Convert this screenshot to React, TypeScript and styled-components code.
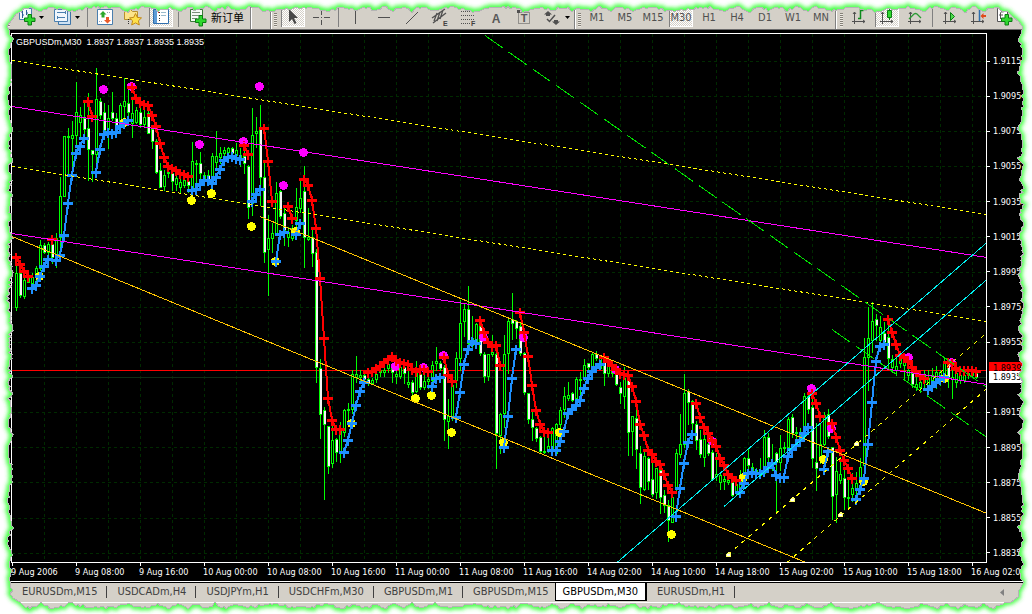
import React from "react";
import styled, { createGlobalStyle, css } from "styled-components";

const face = "#d4d0c8";
const uiFont = `"DejaVu Sans Condensed", "Liberation Sans", "Noto Sans CJK SC", sans-serif`;

const GlobalStyle = createGlobalStyle`
  *, *::before, *::after { box-sizing: border-box; }
  body { margin: 0; background: #fff; font-family: ${uiFont}; }
  button { font: inherit; margin: 0; padding: 0; border: 0; background: none; color: inherit; }
`;

const Terminal = styled.div`
  position: relative;
  padding-bottom: 7px;
  overflow: hidden;
`;

/* ---------- toolbar ---------- */

const Toolbar = styled.header`
  display: flex;
  height: 30px;
  padding-left: 4px;
  background: ${face};
  border-bottom: 1px solid #6c6c6c;
  overflow: hidden;
`;

const ToolGroup = styled.div<{ $min?: number; $last?: boolean }>`
  display: flex;
  flex: none;
  align-items: flex-end;
  gap: 4px;
  padding: 0 2px 2px ${(p) => (p.$last ? 4 : 3)}px;
  min-width: ${(p) => p.$min ?? 0}px;
  border-right: ${(p) => (p.$last ? "0" : "1px solid #808080")};
  box-shadow: ${(p) => (p.$last ? "none" : "1px 0 0 #fff")};
`;

const Grip = styled.span`
  width: 3px;
  height: 14px;
  background: repeating-linear-gradient(#848078 0 1px, #ece9e2 1px 2px);
`;

const Separator = styled.span`
  width: 1px;
  height: 20px;
  margin: 0 1px;
  background: #808080;
`;

const ToolButton = styled.button<{ $width?: number; $pressed?: boolean }>`
  display: flex;
  flex: none;
  align-items: center;
  justify-content: center;
  gap: 3px;
  width: ${(p) => p.$width ?? 24}px;
  height: 20px;
  color: #505050;
  font-size: 11px;
  line-height: 20px;
  white-space: nowrap;
  svg { display: block; flex: none; }
  ${(p) =>
    p.$pressed &&
    css`
      background: repeating-conic-gradient(#fff 0 25%, ${face} 0 50%) 0 0 / 2px 2px;
      box-shadow: inset 1px 0 0 #808080, inset -1px -1px 0 #fff;
    `}
`;

const FrameButton = styled(ToolButton)`
  padding-top: 2px;
`;

const OrderLabel = styled.span`
  color: #000;
  font-family: "Noto Sans CJK SC", sans-serif;
  font-size: 11px;
`;

const Icon = ({ children }: { children: React.ReactNode }) => (
  <svg width="20" height="20" viewBox="0 0 20 20" fill="none" aria-hidden="true">
    {children}
  </svg>
);

const Caret = () => (
  <svg width="5" height="3" viewBox="0 0 5 3" aria-hidden="true">
    <path d="M0 0h5L2.500 3z" fill="#000" />
  </svg>
);

const Plus = ({ x, y }: { x: number; y: number }) => (
  <path
    transform={`translate(${x} ${y})`}
    d="M4 .5h3.500v3.500H11v3.500H7.500V11H4V7.500H.5V4H4z"
    fill="#2fd82f"
    stroke="#0a7d12"
  />
);

const ChartAxes = () => (
  <path d="M5.500 5v12M3 14.500h13M4 7l1.500-2L7 7M14 13l2 1.500-2 1.500" stroke="#505050" />
);

const NewChartIcon = () => (
  <Icon>
    <path d="M3.500 1.500h12v11h-12z" fill="#f4f9fd" stroke="#4a7fae" />
    <path d="M6.500 3v8M5 5h1M7 8h1M10.500 3v5M11 6h1" stroke="#2b5f94" />
    <Plus x={8} y={7} />
  </Icon>
);

const ProfilesIcon = () => (
  <Icon>
    <path d="M6.500 4.500h12v13h-12z" fill="#cfe2f3" stroke="#3d75a8" />
    <path d="M2.500 2.500h13v12h-13z" fill="#f0f6fc" stroke="#4a7fae" />
    <path d="M5 5.500h8M5 10.500h8M5.500 9v3M13.500 4v3" stroke="#4a7fae" />
  </Icon>
);

const MarketWatchIcon = () => (
  <Icon>
    <path d="M2.500 2.500h15v15h-15z" fill="#fff" stroke="#4a7fae" />
    <path d="M8 4l3.500 3.500H9.500v3h-3v-3h-2z" fill="#2aa82a" />
    <path d="M12.500 16.500L9 13h2v-3h3v3h2z" fill="#ea5a2a" />
    <path d="M12 5.500h4M4 14.500h3" stroke="#99aabb" strokeDasharray="1 1" />
  </Icon>
);

const FavoritesIcon = () => (
  <Icon>
    <path d="M1.500 4.500l2-2h4l2 2h5v8h-13z" fill="#fbe48a" stroke="#b8902c" />
    <path d="M5.500 12v6" stroke="#333" strokeDasharray="1 1" />
    <path
      d="M12.500 6.500l1.800 3.900 4.200.5-3.100 2.900.9 4.200-3.800-2.100L8.700 18l.9-4.200-3.100-2.900 4.200-.5z"
      fill="#ffe14a"
      stroke="#c28a18"
    />
  </Icon>
);

const NavigatorIcon = () => (
  <Icon>
    <path d="M2.500 2.500h15v14h-15z" fill="#fff" stroke="#2f6fae" />
    <path d="M3 3h3v13H3z" fill="#5d9bd6" />
    <path d="M8 5.500h1M8 8.500h1M8 11.500h1M8 13.500h1" stroke="#333" />
    <path d="M7 5.500h1" stroke="#e33" />
    <path d="M10 5.500h5M10 8.500h5" stroke="#9bc" />
  </Icon>
);

const NewOrderIcon = () => (
  <Icon>
    <path d="M2.500 2.500h12v12h-12z" fill="#f4faf4" stroke="#3b7a3b" />
    <path d="M4 5.500h8M4 8.500h8M4 11.500h5" stroke="#7a8f7a" />
    <Plus x={7} y={8} />
  </Icon>
);

const CursorIcon = () => (
  <Icon>
    <path d="M6 2v13l3-3 2.500 5 2-1-2.500-5h4z" fill="#484848" />
  </Icon>
);

const CrosshairIcon = () => (
  <Icon>
    <path d="M2 10.500h6M13 10.500h6M10.500 3v5M10.500 13v5" stroke="#505050" />
    <path d="M10 10.500h1" stroke="#505050" />
  </Icon>
);

const VerticalLineIcon = () => (
  <Icon>
    <path d="M9.500 4v13" stroke="#505050" />
  </Icon>
);

const HorizontalLineIcon = () => (
  <Icon>
    <path d="M4 10.500h12" stroke="#505050" />
  </Icon>
);

const TrendLineIcon = () => (
  <Icon>
    <path d="M4 17L16 5" stroke="#505050" />
  </Icon>
);

const SmallMark = styled.text`
  font: bold 7px "Liberation Sans", sans-serif;
`;

const ChannelIcon = () => (
  <Icon>
    <path d="M2 11L15 2M3 16L16 6M4 14l3-8M7 14l3-9M10 12l3-9" stroke="#505050" strokeWidth="1.300" />
    <SmallMark x="13" y="19" fill="#404040">E</SmallMark>
  </Icon>
);

const FibonacciIcon = () => (
  <Icon>
    <path d="M3 4.500h14M3 8.500h14M3 12.500h14M3 16.500h9" stroke="#505050" strokeDasharray="1 1" />
    <SmallMark x="13" y="19" fill="#404040">F</SmallMark>
  </Icon>
);

const TextIcon = () => (
  <Icon>
    <text x="10" y="16" textAnchor="middle" fontFamily="Liberation Sans" fontWeight="bold" fontSize="12" fill="#585858">
      A
    </text>
  </Icon>
);

const TextLabelIcon = () => (
  <Icon>
    <path d="M4.500 5.500h11v11h-11z" stroke="#505050" strokeDasharray="1 1" />
    <path d="M3 3h3v3H3z" fill="#505050" />
    <text x="10" y="15" textAnchor="middle" fontFamily="Liberation Sans" fontWeight="bold" fontSize="11" fill="#585858">
      T
    </text>
  </Icon>
);

const ArrowsIcon = () => (
  <Icon>
    <path d="M6 4l4 3.500H8V9H4V7.500H2zM14 18l-4-3.500h2V13h4v1.500h2z" fill="#505050" />
    <path d="M5 12l2.500 2.500L13 8" stroke="#505050" strokeWidth="1.500" />
  </Icon>
);

const BarsIcon = () => (
  <Icon>
    <ChartAxes />
    <path d="M11.500 2v10M11.500 3.500h3M9 11.500h3" stroke="#0c8a1c" strokeWidth="1.500" />
  </Icon>
);

const CandlesIcon = () => (
  <Icon>
    <ChartAxes />
    <path d="M12.500 1v12" stroke="#0a7d12" />
    <path d="M10.500 3.500h4v7h-4z" fill="#2fd82f" stroke="#0a7d12" />
  </Icon>
);

const LineIcon = () => (
  <Icon>
    <ChartAxes />
    <path d="M4 12l5-5q1.500-1 3 0l4 4" stroke="#2a9a32" strokeWidth="1.300" />
  </Icon>
);

const AutoScrollIcon = () => (
  <Icon>
    <ChartAxes />
    <path d="M10.500 5.500l4 4-4 4z" fill="#4fdc4f" stroke="#0a7d12" />
  </Icon>
);

const ShiftIcon = () => (
  <Icon>
    <ChartAxes />
    <path d="M11.500 3v11" stroke="#2f6fae" strokeWidth="1.500" />
    <path d="M12.500 9l3-3v2h2.500v2h-2.500v2z" fill="#e04a1a" />
  </Icon>
);

const IndicatorsIcon = () => (
  <Icon>
    <path d="M1.500 1.500h7l3 3v10h-10z" fill="#fff" stroke="#555" />
    <path d="M4.500 12V6q0-2 3-1M3 8h4" stroke="#555" />
    <Plus x={5} y={7} />
  </Icon>
);

/* ---------- chart ---------- */

const ChartArea = styled.main`
  display: grid;
  grid-template-columns: minmax(0, 1fr) 45px;
  padding: 3px 0 0 11px;
  background: #000;
  color: #fff;
  font-size: 9px;
  line-height: 12px;
`;

const Plot = styled.section`
  position: relative;
  border: 1px solid #fff;
  svg { display: block; width: 100%; height: auto; }
`;

const Quote = styled.div`
  position: absolute;
  top: 2px;
  left: 4px;
  font-family: "Liberation Sans", sans-serif;
  white-space: pre;
`;

const PriceAxis = styled.div`
  position: relative;
  display: flex;
  flex-direction: column;
  justify-content: space-between;
  padding: 22px 0 4px;
`;

const Price = styled.div<{ $current?: boolean }>`
  position: relative;
  display: flex;
  align-items: center;
  gap: 3px;
  height: 12px;
  &::before { content: ""; width: 3px; height: 1px; background: #fff; }
  ${(p) => p.$current && css`margin-left: 2px; gap: 1px; background: #fff; color: #000;`}
`;

const AskTag = styled.div`
  position: absolute;
  top: 62%;
  left: 2px;
  right: 0;
  height: 12px;
  padding-left: 4px;
  background: #f00;
  color: #000;
`;

const TimeAxis = styled.div`
  display: grid;
  grid-template-columns: repeat(15, minmax(0, 64fr)) minmax(0, 15fr);
  height: 18px;
  padding-left: 1px;
`;

const Time = styled.div`
  position: relative;
  padding-top: 3px;
  white-space: nowrap;
  text-indent: -1px;
  &::before {
    content: "";
    position: absolute;
    top: 0;
    left: 0;
    width: 1px;
    height: 3px;
    background: #fff;
  }
`;

const prices = [
  "1.9115", "1.9095", "1.9075", "1.9055", "1.9035", "1.9015", "1.8995", "1.8975",
  "1.8955", "1.8935", "1.8915", "1.8895", "1.8875", "1.8855", "1.8835",
];

const times = [
  "9 Aug 2006", "9 Aug 08:00", "9 Aug 16:00", "10 Aug 00:00", "10 Aug 08:00", "10 Aug 16:00",
  "11 Aug 00:00", "11 Aug 08:00", "11 Aug 16:00", "14 Aug 02:00", "14 Aug 10:00", "14 Aug 18:00",
  "15 Aug 02:00", "15 Aug 10:00", "15 Aug 18:00", "16 Aug 02:00",
];

/* One candle per entry, 4 units apart: high, body top, body bottom, low; "b" marks a falling candle. */
const candles = `
263 273 307 310|267 273 295 297 b|277 280 296 298|273 277 282 282|273 277 283 283|266 268 277 283|240 245 268 270|243 245 252 253 b
242 244 252 258|240 244 257 263 b|233 238 257 267|177 196 237 257|136 136 196 196|128 136 137 174|121 135 138 173|82 112 135 145
107 115 122 138|102 118 129 137 b|93 128 149 180 b|150 150 154 181 b|68 99 154 173|98 101 115 118 b|103 112 130 132 b|105 118 129 148
92 112 118 120 b|113 118 125 127 b|103 105 123 123|78 101 106 119|88 103 112 120 b|97 113 123 137|107 110 122 123|105 112 124 127 b
108 117 124 127|107 113 133 133 b|127 129 141 148 b|139 141 172 173 b|163 170 187 187 b|170 175 186 190|170 172 173 177|172 173 181 190 b
173 178 184 190|177 182 187 192|175 180 185 187|173 181 185 192 b|142 161 187 193|160 163 164 182|152 163 173 178 b|172 175 178 183
170 175 182 185 b|153 156 183 187|131 156 162 170|147 153 157 163|147 150 153 162|147 148 152 155|147 148 153 160 b|143 150 155 158
148 155 158 166|140 156 163 173 b|165 166 207 218 b|108 135 203 215|117 131 133 147|105 128 177 205 b|163 177 252 262 b|215 238 249 295
223 233 238 252|182 193 233 234|190 191 216 218 b|208 213 230 245 b|227 232 237 246|225 228 238 240|188 207 220 227|180 198 208 212
166 191 237 267 b|208 237 239 240|227 237 253 266 b|249 252 367 382 b|359 368 414 438 b|407 410 424 499 b|426 426 466 473 b|425 440 463 467
438 439 452 461 b|422 430 452 462|409 410 432 436|403 409 410 420|370 374 409 413|356 374 377 382|370 375 377 380|373 375 379 383 b
377 379 383 385 b|378 380 383 384|373 374 379 382|368 370 372 376|367 370 372 376|363 364 368 372|363 365 372 382 b|366 374 376 383
365 367 376 378|366 367 373 383 b|367 382 384 387|380 382 392 395 b|361 370 391 392|370 374 387 389 b|373 381 387 389|375 379 381 388
361 365 380 381|347 361 363 370|361 363 368 370 b|365 367 419 440 b|399 416 421 448|383 385 418 420|352 358 380 387|300 323 358 370
303 309 321 336|286 309 343 346 b|316 338 345 347|323 324 342 344|325 326 353 355 b|352 354 376 382 b|354 354 376 380|335 352 354 356
352 354 433 468 b|413 414 435 453|335 354 413 427|318 321 353 373|293 319 323 339 b|320 321 328 338 b|322 326 353 355 b|352 353 392 394 b
393 393 419 423 b|412 419 427 440 b|427 428 438 441 b|436 437 451 453 b|435 451 452 453|437 446 451 452|427 428 450 451|423 424 453 454
407 410 424 427|387 396 409 417|382 395 398 400|392 393 400 401 b|377 379 398 400|372 379 380 400|359 365 379 380|363 363 367 372 b
353 354 368 372|351 354 358 360 b|357 358 368 368|357 360 373 385 b|358 365 373 376|360 367 373 376 b|365 372 384 385 b|382 387 393 403 b
367 378 396 408|378 379 432 455 b|416 416 431 455|410 418 449 468 b|446 453 487 503 b|452 456 489 490|457 458 481 489 b|460 479 494 496 b
468 468 492 498|467 470 497 513 b|490 495 505 512 b|500 505 520 541 b|490 497 522 522|449 453 487 490|414 444 454 457|374 393 444 447
389 391 402 424 b|400 401 423 435 b|421 424 440 449 b|430 439 454 457 b|433 439 457 466|440 444 453 455 b|450 452 479 480 b|453 474 476 480
473 475 482 489|476 479 481 489|475 480 482 484|480 482 495 496 b|483 484 493 494|470 480 487 490|457 458 473 475|448 458 465 470 b
463 467 472 474|468 470 472 475|458 470 475 477|430 437 473 475|433 437 457 465 b|444 462 467 470|452 453 462 512 b|435 448 462 470
442 447 448 452|417 419 447 450|414 417 433 437 b|427 432 433 440|428 432 435 438|393 396 432 433|388 396 409 413 b|387 407 458 467 b
423 462 468 490 b|423 444 457 463|412 415 444 445|409 414 436 438 b|447 447 496 519 b|457 471 494 522|457 474 480 483|467 478 497 509 b
477 497 498 507|473 488 494 501|472 483 490 498|458 467 477 490|338 357 465 477|307 338 357 390|302 321 340 352|314 319 325 340 b
316 327 340 347|322 333 342 345 b|325 337 358 368 b|355 359 367 372|357 366 370 375|355 359 363 367|358 362 365 378|362 370 375 380
370 373 384 387 b|372 384 387 390|378 382 387 392|370 375 382 388|370 378 388 390|368 375 380 390|366 372 380 388|370 372 378 385
357 362 373 378|360 363 377 387 b|367 377 379 398|368 373 382 387|372 375 380 383|372 375 380 382|368 373 375 378|368 372 375 377
368 373 377 378 b`
  .trim()
  .split(/[|\n]/)
  .map((entry, i) => {
    const [high, top, bottom, low, down] = entry.trim().split(" ");
    return { x: 16 + i * 4, high: +high, top: +top, bottom: +bottom, low: +low, down: down === "b" };
  });

/* Signal runs: start x, then one y for every following bar. */
const sellRuns = [
  [16, 257, 264, 271, 276], [52, 239], [88, 101, 116],
  [132, 87, 98, 102, 104, 105, 115, 126, 143, 157, 166, 168, 170, 173, 174, 176],
  [244, 145, 154], [264, 128, 161, 201], [288, 206, 218],
  [304, 179, 185, 200, 228, 278, 338, 398, 420, 429, 429],
  [368, 372, 371, 368, 366, 362, 359, 356, 360, 362, 363, 364, 369, 371, 369, 369, 371],
  [444, 357, 375, 381], [480, 320, 332, 342, 346, 345, 365],
  [520, 312, 332, 356, 385, 410, 424, 431, 432],
  [604, 357, 361, 365, 369, 373, 374, 375, 386, 401, 424, 435, 450, 454, 461, 464, 474, 485, 492],
  [696, 403, 417, 427, 433, 440, 446, 458, 465, 474, 477, 480],
  [812, 393, 403, 416], [832, 423, 437, 450, 460, 468, 478],
  [888, 319, 332, 344, 355, 357, 361, 367, 371, 375, 378],
  [948, 362, 363, 368, 370, 370, 370, 370, 371],
];

const buyRuns = [
  [32, 288, 285, 276, 266, 259],
  [56, 260, 255, 235, 203, 175, 153, 146, 138],
  [96, 172, 149, 134, 132, 133, 132, 126, 123, 120],
  [192, 190, 189, 184, 180, 180, 183, 177, 169, 160, 157, 156, 158, 159],
  [252, 201, 194, 189], [276, 261, 234, 232], [296, 234, 223],
  [344, 452, 440, 423, 405, 391, 382], [432, 386, 378, 377],
  [456, 417, 392, 364, 349, 341, 343], [504, 447, 416, 378, 349],
  [552, 450, 450, 441, 431, 413, 409, 405, 400, 388, 378, 371, 367, 364],
  [676, 516, 488, 463, 442, 434],
  [740, 492, 483, 473, 472, 473, 473, 471, 467, 463, 475, 477, 477, 456, 449, 445, 440, 433, 427],
  [824, 469, 451], [856, 499, 489, 478, 444, 402, 361, 346, 344],
  [928, 389, 386, 382, 379, 377],
];

const highDots = [
  [103, 89], [131, 86], [259, 86], [243, 141], [199, 144], [283, 185], [303, 152], [395, 366], [423, 367],
  [443, 355], [483, 337], [523, 337], [615, 369], [712, 441], [811, 388], [831, 428], [908, 357], [951, 362],
];

const lowDots = [
  [39, 276], [124, 122], [191, 200], [211, 193], [251, 226], [275, 261], [295, 231], [351, 423], [415, 398],
  [431, 395], [451, 432], [503, 442], [559, 432], [671, 534], [743, 477], [823, 459], [863, 481], [944, 378],
];

const anchors = [[728, 554], [792, 499], [856, 443], [840, 514]];

const lines: { d: string; color: string; dash?: string }[] = [
  { d: "M12 60.500L987 214.500", color: "#ffff00", dash: "3 3" },
  { d: "M12 166.500L987 321.500", color: "#ffff00", dash: "3 3" },
  { d: "M12 106.500L987 257.500", color: "#ff00ff" },
  { d: "M12 233.500L987 384.500", color: "#ff00ff" },
  { d: "M12 236.500L806 562.500", color: "#ffc400" },
  { d: "M260 216.500L987 513.500", color: "#ffc400" },
  { d: "M485 35.500L987 387.500", color: "#00e000", dash: "22 7" },
  { d: "M832 329.500L987 437.500", color: "#00e000", dash: "22 7" },
  { d: "M617 562.500L987 242.500", color: "#00f0f0" },
  { d: "M724 506.500L987 279.500", color: "#00f0f0" },
  { d: "M728 554.500L987 332.500", color: "#ffff00", dash: "4 5" },
  { d: "M787 562.500L987 388.500", color: "#ffff00", dash: "4 5" },
];

const gridRows = [61, 96, 131, 166, 201, 237, 272, 307, 342, 412, 447, 482, 518, 553];
const gridColumns = Array.from({ length: 30 }, (_, i) => 44 + i * 32);

const SignalRun = ({ run, color }: { run: number[]; color: string }) => {
  const [start, ...ys] = run;
  const points = ys.map((y, i) => [start + i * 4, y]);
  return (
    <g stroke={color} fill="none">
      <polyline points={points.map((p) => p.join(",")).join(" ")} strokeWidth="2" />
      <path d={points.map(([x, y]) => `M${x - 5} ${y + 0.5}h10`).join("")} strokeWidth="3" />
      <path d={points.map(([x, y]) => `M${x} ${y - 4}v10`).join("")} strokeWidth="2" />
    </g>
  );
};

const PriceChart = () => (
  <svg viewBox="12 34 974 528" shapeRendering="crispEdges" role="img" aria-label="GBPUSDm M30 candlestick chart">
    <path
      d={gridRows.map((y) => `M12 ${y + 0.5}H986`).join("") + gridColumns.map((x) => `M${x + 0.5} 34V562`).join("")}
      stroke="#002a00"
      strokeDasharray="3 3"
    />
    <path d="M12 377.500H986" stroke="#0f2c14" />
    <path d="M12 370.500H986" stroke="#ff0000" />
    {candles.map((c) => (
      <g key={c.x}>
        <path d={`M${c.x + 0.5} ${c.high}V${c.low + 1}`} stroke="#00ff00" />
        <rect x={c.x - 1} y={c.top} width="3" height={Math.max(1, c.bottom - c.top + 1)} fill="#00ff00" />
        {c.bottom - c.top > 1 && (
          <rect
            x={c.x}
            y={c.top + 1}
            width={c.down ? 2 : 1}
            height={c.bottom - c.top - 1}
            fill={c.down ? "#f4f4f4" : "#000"}
          />
        )}
      </g>
    ))}
    {highDots.map(([x, y]) => (
      <circle key={`${x}-${y}`} cx={x + 0.5} cy={y + 0.5} r="4.500" fill="#ff00ff" />
    ))}
    {lowDots.map(([x, y]) => (
      <circle key={`${x}-${y}`} cx={x + 0.5} cy={y + 0.5} r="4.500" fill="#ffff00" />
    ))}
    {sellRuns.map((run) => <SignalRun key={run[0]} run={run} color="#ff0000" />)}
    {buyRuns.map((run) => <SignalRun key={run[0]} run={run} color="#1e90ff" />)}
    {lines.map((l) => (
      <path key={l.d} d={l.d} stroke={l.color} strokeDasharray={l.dash} fill="none" />
    ))}
    {anchors.map(([x, y]) => (
      <g key={x}>
        <path d={`M${x - 2} ${y + 3}v-3l2-2h1l2 2v3z`} fill="#ffff66" />
        <rect x={x - 1} y={y} width="3" height="2" fill="#fff" />
      </g>
    ))}
  </svg>
);

/* ---------- chart tabs ---------- */

const TabBar = styled.nav`
  display: flex;
  align-items: flex-start;
  height: 27px;
  padding-left: 12px;
  border-top: 1px solid #fff;
  background: linear-gradient(#000 0 1px, ${face} 1px 20px, #fff 20px 21px, ${face} 21px);
`;

const Tab = styled.button<{ $active?: boolean; $divider?: boolean }>`
  position: relative;
  height: 19px;
  padding: 0 10px;
  color: #404040;
  font-size: 11px;
  line-height: 20px;
  white-space: nowrap;
  ${(p) =>
    p.$divider &&
    css`
      &::after {
        content: "";
        position: absolute;
        top: 4px;
        right: 0;
        width: 1px;
        height: 12px;
        background: #404040;
      }
    `}
  ${(p) =>
    p.$active &&
    css`
      margin-left: -4px;
      padding: 0 7px;
      background: #fff;
      color: #000;
      border: solid #000;
      border-width: 1px 2px 1px 1px;
      line-height: 18px;
    `}
`;

const ScrollTabs = styled.button`
  height: 20px;
  margin-left: auto;
  padding-right: 28px;
  svg { display: block; }
`;

const tabs = [
  "EURUSDm,M15", "USDCADm,H4", "USDJPYm,H1", "USDCHFm,M30",
  "GBPUSDm,M1", "GBPUSDm,M15", "GBPUSDm,M30", "EURUSDm,H1",
];
const activeTab = 6;

/* ---------- torn, glowing border ---------- */

const TornFrame = styled.svg`
  position: absolute;
  inset: 0;
  width: 100%;
  height: 100%;
  pointer-events: none;
`;

const tornContour = (() => {
  let seed = 11;
  const noise = () => {
    seed = (seed * 16807) % 2147483647;
    return seed / 2147483647;
  };
  const depth = (t: number) => Math.abs(Math.sin(t / 9 + Math.sin(t / 31) * 2)) * 4 + noise() * 3;
  const points: string[] = [];
  const add = (x: number, y: number) => points.push(`${Math.round(x)} ${Math.round(y)}`);
  for (let x = 22; x < 1004; x += 2) add(x, 13 - depth(x));
  add(1008, 12);
  add(1013, 17);
  add(1019, 22);
  for (let y = 26; y < 592; y += 2) add(1017 + depth(y), y);
  add(1018, 596);
  add(1011, 601);
  for (let x = 1004; x > 24; x -= 2) add(x, 601 + depth(x));
  add(20, 601);
  add(13, 597);
  for (let y = 592; y > 24; y -= 2) add(14 - depth(y), y);
  add(12, 20);
  add(16, 14);
  return `M${points.join("L")}Z`;
})();

const tornOutside = `M0 0H1032V614H0Z${tornContour}`;

const TornBorder = () => (
  <TornFrame viewBox="0 0 1032 614" preserveAspectRatio="none" aria-hidden="true">
    <defs>
      <clipPath id="outside">
        <path d={tornOutside} clipRule="evenodd" />
      </clipPath>
      <filter id="glow" x="-2%" y="-2%" width="104%" height="104%">
        <feGaussianBlur stdDeviation="2" />
      </filter>
    </defs>
    <path d={tornOutside} fill="#fff" fillRule="evenodd" />
    <g clipPath="url(#outside)">
      <path d={tornContour} fill="none" stroke="#38ff38" strokeWidth="5" filter="url(#glow)" />
    </g>
    <path d={tornContour} fill="none" stroke="#b4b4b4" strokeWidth="1" shapeRendering="crispEdges" />
  </TornFrame>
);

export default function App() {
  return (
    <Terminal>
      <GlobalStyle />
      <Toolbar>
        <ToolGroup>
          <Grip />
          <ToolButton $width={32} aria-label="New chart"><NewChartIcon /><Caret /></ToolButton>
          <ToolButton $width={32} aria-label="Profiles"><ProfilesIcon /><Caret /></ToolButton>
          <Separator />
          <ToolButton aria-label="Market watch"><MarketWatchIcon /></ToolButton>
          <ToolButton aria-label="Favorites"><FavoritesIcon /></ToolButton>
          <ToolButton $pressed aria-label="Navigator"><NavigatorIcon /></ToolButton>
          <Separator />
          <ToolButton $width={64}><NewOrderIcon /><OrderLabel>新订单</OrderLabel></ToolButton>
        </ToolGroup>
        <ToolGroup $min={20} />
        <ToolGroup>
          <Grip />
          <ToolButton $pressed aria-label="Cursor"><CursorIcon /></ToolButton>
          <ToolButton aria-label="Crosshair"><CrosshairIcon /></ToolButton>
          <Separator />
          <ToolButton aria-label="Vertical line"><VerticalLineIcon /></ToolButton>
          <ToolButton aria-label="Horizontal line"><HorizontalLineIcon /></ToolButton>
          <ToolButton aria-label="Trend line"><TrendLineIcon /></ToolButton>
          <ToolButton aria-label="Equidistant channel"><ChannelIcon /></ToolButton>
          <ToolButton aria-label="Fibonacci"><FibonacciIcon /></ToolButton>
          <ToolButton aria-label="Text"><TextIcon /></ToolButton>
          <ToolButton aria-label="Text label"><TextLabelIcon /></ToolButton>
          <ToolButton $width={32} aria-label="Arrows"><ArrowsIcon /><Caret /></ToolButton>
        </ToolGroup>
        <ToolGroup>
          <Grip />
          {["M1", "M5", "M15", "M30", "H1", "H4", "D1", "W1", "MN"].map((frame) => (
            <FrameButton key={frame} $pressed={frame === "M30"}>{frame}</FrameButton>
          ))}
        </ToolGroup>
        <ToolGroup $last>
          <Grip />
          <ToolButton aria-label="Bar chart"><BarsIcon /></ToolButton>
          <ToolButton $pressed aria-label="Candlesticks"><CandlesIcon /></ToolButton>
          <ToolButton aria-label="Line chart"><LineIcon /></ToolButton>
          <Separator />
          <ToolButton aria-label="Auto scroll"><AutoScrollIcon /></ToolButton>
          <ToolButton aria-label="Chart shift"><ShiftIcon /></ToolButton>
          <ToolButton aria-label="Indicators"><IndicatorsIcon /></ToolButton>
        </ToolGroup>
      </Toolbar>

      <ChartArea>
        <Plot>
          <PriceChart />
          <Quote>{"GBPUSDm,M30  1.8937 1.8937 1.8935 1.8935"}</Quote>
        </Plot>
        <PriceAxis>
          <AskTag>1.8939</AskTag>
          {prices.map((price) => (
            <Price key={price} $current={price === "1.8935"}>{price}</Price>
          ))}
        </PriceAxis>
        <TimeAxis>
          {times.map((time) => <Time key={time}>{time}</Time>)}
        </TimeAxis>
      </ChartArea>

      <TabBar>
        {tabs.map((tab, i) => (
          <Tab key={tab} $active={i === activeTab} $divider={i !== activeTab && i !== activeTab - 1}>
            {tab}
          </Tab>
        ))}
        <ScrollTabs aria-label="Scroll tabs left">
          <svg width="4" height="7" viewBox="0 0 4 7"><path d="M4 0v7L0 3.500z" fill="#808080" /></svg>
        </ScrollTabs>
      </TabBar>
      <TornBorder />
    </Terminal>
  );
}
